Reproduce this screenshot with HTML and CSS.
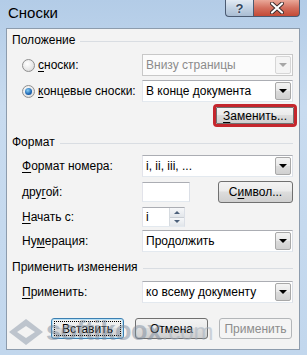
FILE: index.html
```html
<!doctype html>
<html>
<head>
<meta charset="utf-8">
<title>Сноски</title>
<link rel="stylesheet" href="styles.css">
</head>
<body>
<div class="window">
	<div class="titlebar">
		<div class="title">Сноски</div>
		<div class="caption-btns">
			<div class="cap cap-help">?</div>
			<div class="cap cap-close">
				<svg width="14" height="12" viewBox="0 0 14 12"><path d="M2 1.5 L12 10.5 M12 1.5 L2 10.5" stroke="#3a2a2a" stroke-width="4" stroke-linecap="round"/><path d="M2 1.5 L12 10.5 M12 1.5 L2 10.5" stroke="#fff" stroke-width="2.2" stroke-linecap="round"/></svg>
			</div>
		</div>
	</div>

	<div class="client">
		<div class="group">
			<div class="group-title first">Положение</div>
			<div class="row first">
				<label class="radio-label"><span class="radio"></span><span><u>с</u>носки:</span></label>
				<div class="select disabled"><span class="value">Внизу страницы</span><span class="arrow"></span></div>
			</div>
			<div class="row">
				<label class="radio-label"><span class="radio checked"></span><span><u>к</u>онцевые сноски:</span></label>
				<div class="select"><span class="value">В конце документа</span><span class="arrow"></span></div>
			</div>
			<div class="row replace-row">
				<button class="btn btn-marked"><u>З</u>аменить...</button>
			</div>
		</div>

		<div class="group">
			<div class="group-title">Формат</div>
			<div class="row first-small">
				<span class="label"><u>Ф</u>ормат номера:</span>
				<div class="select"><span class="value">i, ii, iii, ...</span><span class="arrow"></span></div>
			</div>
			<div class="row">
				<span class="label">дру<u>г</u>ой:</span>
				<div class="split">
					<div class="textbox"></div>
					<button class="btn btn-symbol">С<u>и</u>мвол...</button>
				</div>
			</div>
			<div class="row start-row">
				<span class="label"><u>Н</u>ачать с:</span>
				<div class="spin">
					<span class="value">i</span>
					<span class="spin-btns"><span class="up"></span><span class="down"></span></span>
				</div>
			</div>
			<div class="row numbering-row">
				<span class="label">Ну<u>м</u>ерация:</span>
				<div class="select"><span class="value">Продолжить</span><span class="arrow"></span></div>
			</div>
		</div>

		<div class="group">
			<div class="group-title">Применить изменения</div>
			<div class="row first">
				<span class="label"><u>П</u>рименить:</span>
				<div class="select"><span class="value">ко всему документу</span><span class="arrow"></span></div>
			</div>
		</div>

		<div class="actions">
			<button class="btn btn-default">Вставить</button>
			<button class="btn">Отмена</button>
			<button class="btn" disabled>Применить</button>
		</div>
	</div>

	<div class="watermark">
		<svg width="40" height="30" viewBox="0 0 40 30"><path d="M20 2 L37 15 L20 28 L3 15 Z M20 9 L11 15 L20 21 L29 15 Z" fill="#8897a8" fill-rule="evenodd"/></svg>
		<span class="wm-name">softikoox</span><span class="wm-dom">.com</span>
	</div>
</div>
</body>
</html>
```

FILE: styles.css
```css
* {box-sizing: border-box;}
body {margin: 0; font: 12px "Liberation Sans", Arial, sans-serif; color: #000;}
u {text-decoration: underline; text-underline-offset: 2px;}

.window {position: relative; width: 307px; height: 355px; display: flex; flex-direction: column; overflow: hidden; background: linear-gradient(#b3cce7, #c8dbef 30%, #c2d7ed);}
.titlebar {height: 28px; flex: none; display: flex; align-items: flex-start; padding-left: 8px;}
.title {font-size: 15px; line-height: 18px; margin-top: 4px;}
.caption-btns {margin-left: auto; margin-right: 7px; display: flex;}
.cap {height: 17px; border: 1px solid #4b5b72; border-top: none; display: flex; align-items: center; justify-content: center;}
.cap-help {width: 28px; border-right: none; border-radius: 0 0 0 4px; background: linear-gradient(#e2eaf3, #c2d2e3 50%, #aabdd3); font: bold 13px "Liberation Sans", sans-serif; color: #34465e; text-shadow: 0 0 2px #fff;}
.cap-close {width: 47px; border-radius: 0 0 4px 0; background: linear-gradient(#eaa899, #d36f5e 50%, #c44a36);}

.client {flex: 1; margin: 0 7px 5px 6px; background: #f3f3f3; border: 1px solid #8d9cad; padding-right: 6px;}

.group-title {display: flex; align-items: center; height: 16px; line-height: 16px; padding-left: 5px; margin-top: 7px;}
.group-title.first {margin-top: 3px;}
.group-title::after {content: ""; flex: 1; height: 1px; margin: 2px 0 0 5px; background: #d9dde2;}

.row {display: grid; grid-template-columns: 135px 151px; align-items: center; height: 22px; margin-top: 4px;}
.row.first {margin-top: 6px;}
.row.first-small {margin-top: 5px;}
.row.start-row {margin-top: 3px;}
.row.numbering-row {margin-top: 2px;}
.label {padding-left: 15px; white-space: nowrap;}
.radio-label {display: flex; align-items: center; gap: 3px; padding-left: 15px; white-space: nowrap;}

.radio {width: 13px; height: 13px; border-radius: 50%; border: 1px solid #8f8f8f; background: radial-gradient(circle at 40% 35%, #fff, #e6e6e6 60%, #cfcfcf); position: relative;}
.radio.checked::after {content: ""; position: absolute; left: 2px; top: 2px; width: 7px; height: 7px; border-radius: 50%; background: radial-gradient(circle at 40% 35%, #8ad0f5, #1c65b3 60%, #0d3f7a);}

.select {display: flex; height: 22px; background: #fff; border: 1px solid #abadb3; border-color: #abadb3 #dbdfe6 #e3e9ef #e2e3ea;}
.select .value {flex: 1; padding-left: 3px; line-height: 20px; white-space: nowrap; overflow: hidden;}
.select .arrow {width: 16px; margin: 1px; border: 1px solid #a8a8a8; border-radius: 2px; background: linear-gradient(#f4f4f4, #e8e8e8 50%, #dcdcdc 50%, #d0d0d0); display: flex; align-items: center; justify-content: center;}
.select .arrow::before {content: ""; border-left: 4px solid transparent; border-right: 4px solid transparent; border-top: 4px solid #000;}
.select.disabled {border-color: #c8c8c8; background: #fbfbfb;}
.select.disabled .value {color: #8b8b8b;}
.select.disabled .arrow {border-color: #d6d6d6; background: #f4f4f4;}
.select.disabled .arrow::before {border-top-color: #a6a6a6;}

.split {display: flex; align-items: center; justify-content: space-between;}
.textbox {width: 48px; height: 20px; background: #fff; border: 1px solid #abadb3; border-color: #abadb3 #dbdfe6 #e3e9ef #e2e3ea;}
.spin {display: flex; width: 43px; height: 20px; background: #fff; border: 1px solid #abadb3; border-color: #abadb3 #dbdfe6 #e3e9ef #e2e3ea;}
.spin .value {flex: 1; padding-left: 3px; line-height: 18px;}
.spin-btns {width: 15px; display: flex; flex-direction: column; border-left: 1px solid #d6dbe0;}
.spin-btns span {flex: 1; display: flex; align-items: center; justify-content: center; background: linear-gradient(#f6f7f9, #e2e6ea);}
.spin-btns .up {border-bottom: 1px solid #c9ced4;}
.spin-btns .up::before {content: ""; border-left: 3px solid transparent; border-right: 3px solid transparent; border-bottom: 3px solid #4c607a;}
.spin-btns .down::before {content: ""; border-left: 3px solid transparent; border-right: 3px solid transparent; border-top: 3px solid #4c607a;}

.btn {height: 21px; width: 73px; padding: 0; font: inherit; color: #000; border: 1px solid #707070; border-radius: 3px; background: linear-gradient(#f3f3f3, #ebebeb 45%, #dddddd 50%, #cfcfcf); white-space: nowrap;}
.btn:disabled {border-color: #b3b6b9; background: #f4f4f4; color: #8c8c8c;}
.btn-default {border-color: #3c7fb1; box-shadow: inset 0 0 0 1px #b7e1f7; outline: 1px dotted #000; outline-offset: -4px;}
.btn-symbol {width: 75px; height: 22px;}

.replace-row {display: flex; justify-content: flex-end; height: 23px; margin-top: 2px;}
.btn-marked {width: 78px; height: 17px; margin-right: -1px; line-height: 14px; outline: 3px solid #c4262d; border-radius: 1px;}

.actions {display: flex; justify-content: flex-end; gap: 11px; margin-top: 15px; padding-right: 1px;}

/* watermark laid over the dialog */
.watermark {position: absolute; left: 6px; top: 316px; display: flex; align-items: center; opacity: 0.5; pointer-events: none; white-space: nowrap;}
.wm-name {font: bold 27px "Liberation Sans", sans-serif; color: #7d8b9c; letter-spacing: -0.5px;}
.wm-dom {font: 24px "Liberation Sans", sans-serif; color: #a3b0bf;}
```
